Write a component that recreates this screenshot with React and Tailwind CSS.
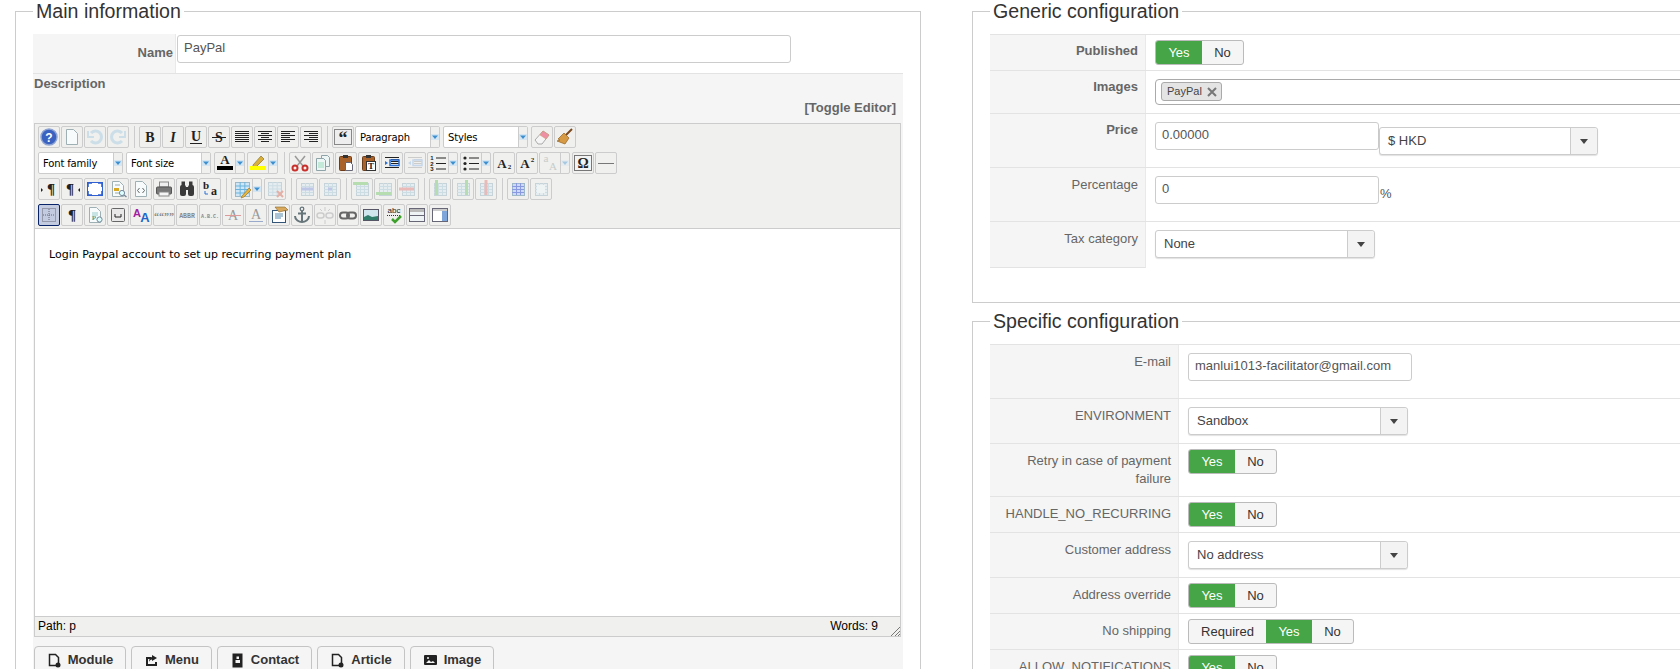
import React from "react";

const sans = "font-['Liberation_Sans',Arial,sans-serif]";

const Lines = ({ rows, color = "#222" }) => (
  <g stroke={color} strokeWidth="1">
    {rows.map(([a, b], i) => (
      <line key={i} x1={a} x2={b} y1={4.5 + i * 2} y2={4.5 + i * 2} />
    ))}
  </g>
);
const T = ({ c, x = 10, y = 15, s = 14, st = "normal", w = "bold", f = "#222", fam = "Liberation Serif" }) => (
  <text x={x} y={y} fontSize={s} fontStyle={st} fontWeight={w} fill={f} textAnchor="middle" fontFamily={fam}>{c}</text>
);
const Grid = ({ x = 4, y = 4, w = 12, h = 12, fill = "#dcebf3", line = "#a9cbdc" }) => (
  <g>
    <rect x={x + 0.5} y={y + 0.5} width={w} height={h} fill={fill} stroke="#9db9c8" />
    {[1, 2, 3].map((k) => (
      <line key={k} x1={x} x2={x + w} y1={y + 0.5 + (k * h) / 4} y2={y + 0.5 + (k * h) / 4} stroke={line} />
    ))}
    {[1, 2].map((k) => (
      <line key={k} y1={y} y2={y + h} x1={x + 0.5 + (k * w) / 3} x2={x + 0.5 + (k * w) / 3} stroke={line} />
    ))}
  </g>
);
const Page = ({ fill = "#f7fbfb" }) => <path d="M4.5 2.5h7l4 4v11h-11z" fill={fill} stroke="#9fb0b5" />;
const Clip = () => (
  <g>
    <rect x="3.5" y="3.5" width="12" height="14" rx="1" fill="#a9622a" stroke="#6d3c18" />
    <rect x="7" y="2" width="5" height="3" fill="#333" />
  </g>
);

const icons = {
  help: (<g><circle cx="10" cy="10" r="8" fill="#3a62c0" stroke="#8ea4d2" strokeWidth="1.5" /><T c="?" y={14.5} s={12} f="#fff" fam="Liberation Sans" /></g>),
  page: <Page />,
  undo: (<g fill="none" stroke="#a9cde4" strokeWidth="3"><path d="M6 6a6 6 0 1 1 0 8" /><path d="M3 4v6h6" strokeWidth="2" /></g>),
  redo: (<g fill="none" stroke="#a9cde4" strokeWidth="3"><path d="M14 6a6 6 0 1 0 0 8" /><path d="M17 4v6h-6" strokeWidth="2" /></g>),
  b: <T c="B" />,
  i: <T c="I" st="italic" />,
  u: (<g><T c="U" y={14} w="bold" /><line x1="4" x2="16" y1="16.5" y2="16.5" stroke="#222" /></g>),
  s: (<g><T c="S" /><line x1="3" x2="17" y1="10.5" y2="10.5" stroke="#222" /></g>),
  justify: <Lines rows={[[3, 17], [3, 17], [3, 17], [3, 17], [3, 17], [3, 17]]} />,
  center: <Lines rows={[[3, 17], [6, 14], [3, 17], [6, 14], [3, 17], [6, 14]]} />,
  left: <Lines rows={[[3, 17], [3, 12], [3, 17], [3, 12], [3, 17], [3, 12]]} />,
  right: <Lines rows={[[3, 17], [8, 17], [3, 17], [8, 17], [3, 17], [8, 17]]} />,
  quote: (<g><rect x="1.5" y="2.5" width="17" height="15" fill="#eee" stroke="#888" /><T c="“" y={17} s={18} /></g>),
  eraser: (<g><path d="M3 13 11 4l6 4-7 9H6z" fill="#f5f5f5" stroke="#aaa" /><path d="M11 4l6 4-3 4-6-4z" fill="#ee8fa5" stroke="#c96" strokeWidth=".5" /></g>),
  broom: (<g><path d="M11 8 17 2" stroke="#7a4a1e" strokeWidth="2" /><path d="M9 6l5 5-4 6-8-3 3-1-2-1z" fill="#d69a45" stroke="#93611e" strokeWidth=".7" /></g>),
  fore: (<g><T c="A" y={11} s={13} /><rect x="2" y="13" width="16" height="4" fill="#000" /></g>),
  hilite: (<g><path d="M5 12 13 3l3 3-8 8H5z" fill="#d9b13a" stroke="#8a7230" strokeWidth=".7" /><rect x="2" y="13" width="16" height="4" fill="#ff0" /></g>),
  cut: (<g fill="none" stroke="#c9302c" strokeWidth="2"><path d="M7 13 15 3" stroke="#999" strokeWidth="1.5" /><path d="M13 13 5 3" stroke="#999" strokeWidth="1.5" /><circle cx="5" cy="15" r="2.5" /><circle cx="15" cy="15" r="2.5" /></g>),
  copy: (<g><path d="M3.5 5.5h7l2 2v10h-9z" fill="#eef5f5" stroke="#8da3a8" /><path d="M8.5 2.5h6l2 2v9h-4v-6l-2-2h-2z" fill="#eef5f5" stroke="#8da3a8" /><path d="M5 10h6M5 12h6M5 14h6" stroke="#9db" /></g>),
  paste: (<g><Clip /><path d="M9.5 9.5h5l2 2v6h-7z" fill="#fff" stroke="#667" /></g>),
  pastet: (<g><Clip /><rect x="7.5" y="8.5" width="9" height="9" fill="#fff" stroke="#333" /><T c="T" x={12} y={16} s={9} /></g>),
  indent: (<g><Lines rows={[[3, 17], [9, 17], [9, 17], [9, 17], [9, 17], [3, 17]]} color="#222" /><rect x="8" y="7" width="9" height="5.5" fill="none" stroke="#2a6fd6" strokeWidth="1.5" /><path d="M3 8l3 2-3 2z" fill="#2a6fd6" /></g>),
  outdent: (<g><Lines rows={[[3, 17], [9, 17], [9, 17], [9, 17], [9, 17], [3, 17]]} color="#aaa" /><rect x="8" y="7" width="9" height="5.5" fill="none" stroke="#9cc0ea" strokeWidth="1.5" /><path d="M6 8l-3 2 3 2z" fill="#9cc0ea" /></g>),
  num: (<g><T c="1" x={4} y={7} s={6} fam="Liberation Sans" /><T c="2" x={4} y={12.5} s={6} fam="Liberation Sans" /><T c="3" x={4} y={18} s={6} fam="Liberation Sans" /><path d="M8 5h10M8 10.5h10M8 16h10" stroke="#222" /></g>),
  bul: (<g><circle cx="4" cy="5" r="1.6" fill="#222" /><circle cx="4" cy="10.5" r="1.6" fill="#222" /><circle cx="4" cy="16" r="1.6" fill="#222" /><path d="M8 5h10M8 10.5h10M8 16h10" stroke="#222" /></g>),
  sub: (<g><T c="A" x={8} y={15} s={13} /><T c="2" x={15.5} y={16} s={7} /></g>),
  sup: (<g><T c="A" x={8} y={15} s={13} /><T c="2" x={15.5} y={9} s={7} /></g>),
  aa: (<g><T c="a" x={6} y={9} s={11} f="#9aa" w="normal" /><T c="A" x={13} y={17} s={11} f="#9aa" w="normal" /></g>),
  charmap: (<g><rect x="1.5" y="2.5" width="17" height="15" fill="#f3f3f3" stroke="#777" /><T c="Ω" y={15} s={14} /></g>),
  hr: <line x1="2" x2="18" y1="10.5" y2="10.5" stroke="#777" />,
  ltr: (<g><T c="¶" x={12} y={15} s={15} /><path d="M2 9l2 2-2 2z" fill="#222" /></g>),
  rtl: (<g><T c="¶" x={8} y={15} s={15} /><path d="M18 9l-2 2 2 2z" fill="#222" /></g>),
  full: (<g><rect x="2.5" y="3.5" width="15" height="13" fill="#fff" stroke="#2f5fd0" /><path d="M3 8V4h4M13 4h4v4M17 12v4h-4M7 16H3v-4" stroke="#2f5fd0" strokeWidth="1.6" fill="none" /></g>),
  preview: (<g><Page /><rect x="6" y="9" width="5" height="3" fill="#d9a81e" /><path d="M7 6h5M7 14h4" stroke="#9aa" /><circle cx="14" cy="14" r="2.6" fill="#dff" stroke="#789" /><path d="M16 16l2.5 2" stroke="#789" strokeWidth="1.5" /></g>),
  code: (<g><Page /><path d="M8.5 9l-2 2.5 2 2.5M11.5 9l2 2.5-2 2.5" fill="none" stroke="#666" /></g>),
  print: (<g><rect x="5.5" y="3" width="9" height="5" fill="#eee" stroke="#888" /><rect x="2.5" y="8" width="15" height="7" rx="1" fill="#777" stroke="#555" /><rect x="5" y="13" width="10" height="4" fill="#f5f5f5" stroke="#888" /></g>),
  find: (<g fill="#3a3a3a"><rect x="3" y="6" width="6" height="11" rx="2" /><rect x="11" y="6" width="6" height="11" rx="2" /><rect x="4.5" y="2.5" width="3.5" height="5" /><rect x="12" y="2.5" width="3.5" height="5" /><rect x="8" y="8" width="4" height="3" /></g>),
  replace: (<g><T c="b" x={6} y={10} s={11} /><T c="a" x={14} y={16} s={12} /><path d="M5 12v3h3" stroke="#2a6fd6" fill="none" /></g>),
  tbl: (<g><Grid x={3} y={3} w={14} h={14} fill="#cfe6f6" line="#6bb3dc" /><path d="M10 17l7-8 2 2-7 7-3 1z" fill="#e9b53a" stroke="#8a6d2a" strokeWidth=".6" /></g>),
  tdel: (<g><Grid x={3} y={3} w={13} h={13} /><path d="M12 12l6 6M18 12l-6 6" stroke="#d9705f" strokeWidth="2" /></g>),
  rowp: (<g><Grid /><rect x="4" y="8.5" width="12" height="3" fill="#8fa0e0" /></g>),
  cellp: (<g><Grid /><rect x="8" y="8.5" width="4" height="3" fill="#8fa0e0" /></g>),
  rowb: (<g><Grid /><rect x="1" y="3" width="15" height="3" fill="#7ccc74" /></g>),
  rowa: (<g><Grid /><rect x="1" y="13" width="15" height="3" fill="#7ccc74" /></g>),
  rowd: (<g><Grid /><rect x="1" y="8.5" width="15" height="3" fill="#e58585" /></g>),
  colb: (<g><Grid /><rect x="5" y="1" width="3" height="15" fill="#7ccc74" /></g>),
  cola: (<g><Grid /><rect x="12" y="1" width="3" height="15" fill="#7ccc74" /></g>),
  cold: (<g><Grid /><rect x="8.5" y="1" width="3" height="15" fill="#e58585" /></g>),
  cell: <Grid fill="#cfd8f8" line="#8a9ae0" />,
  merge: (<g><Grid /><rect x="6" y="6" width="8" height="8" fill="#eef7fb" /></g>),
  visual: (<g fill="none" stroke="#667" strokeDasharray="1 1"><rect x="3.5" y="3.5" width="13" height="13" /><path d="M10 4v12M4 10h12" /></g>),
  para: <T c="¶" y={15} s={15} />,
  tpl: (<g><Page /><path d="M7 8h6M7 10h6" stroke="#9cc" /><T c="P" x={9} y={15} s={7} f="#3a9" /><circle cx="14.5" cy="14.5" r="2.6" fill="#dff" stroke="#789" /></g>),
  nbsp: (<g><rect x="3.5" y="3.5" width="13" height="13" rx="1" fill="#e8e8e8" stroke="#666" /><path d="M7 9v3h6V9" fill="none" stroke="#222" /></g>),
  styleprop: (<g><T c="A" x={6} y={12} s={11} f="#a020a0" fam="Liberation Sans" /><T c="A" x={14} y={17} s={13} f="#2465c9" fam="Liberation Sans" /></g>),
  cite: <T c="““””" y={15} s={10} f="#888" />,
  abbr: <T c="ABBR" y={13} s={6.5} f="#888" fam="Liberation Mono" w="bold" />,
  acro: <T c="A.B.C." y={13} s={5} f="#888" fam="Liberation Mono" w="bold" />,
  del: (<g><T c="A" s={14} w="normal" f="#999" /><line x1="2" x2="18" y1="10.5" y2="10.5" stroke="#d99" /></g>),
  ins: (<g><T c="A" y={14} s={14} w="normal" f="#999" /><line x1="3" x2="17" y1="16.5" y2="16.5" stroke="#9ac" /></g>),
  tmpl: (<g><rect x="3.5" y="5.5" width="13" height="12" fill="#fff" stroke="#357" /><path d="M6 9h8M6 11h8M6 13h6" stroke="#58a" /><path d="M6 2l10 0 3 3-9 2z" fill="#d9a85a" stroke="#85642e" strokeWidth=".6" /></g>),
  anchor: (<g fill="none" stroke="#66757a" strokeWidth="2"><circle cx="10" cy="4" r="1.8" strokeWidth="1.3" /><path d="M10 6v11M6 8.5h8" /><path d="M3 11c0 4 4 6 7 6s7-2 7-6" /></g>),
  unlink: (<g fill="none" stroke="#ccc" strokeWidth="1.5"><rect x="2" y="8" width="7" height="5" rx="2.5" /><rect x="11" y="8" width="7" height="5" rx="2.5" /><path d="M10 2v4M10 15v4M5 4l2 2M15 4l-2 2" strokeWidth="1" /></g>),
  link: (<g fill="none" stroke="#666" strokeWidth="2"><rect x="2" y="7.5" width="9" height="6" rx="3" /><rect x="9" y="7.5" width="9" height="6" rx="3" /></g>),
  image: (<g><rect x="2.5" y="4.5" width="15" height="11" fill="#cfe6ee" stroke="#556" /><path d="M3 15v-3l4-2 4 2 6-1v4z" fill="#2f7d6a" /></g>),
  spell: (<g><T c="abc" y={8} s={8} w="normal" fam="Liberation Sans" /><line x1="3" x2="17" y1="10.5" y2="10.5" stroke="#333" strokeDasharray="1 1" /><path d="M8 14l3 3 6-6" fill="none" stroke="#3ea02c" strokeWidth="2.5" /></g>),
  layer: (<g><rect x="2.5" y="3.5" width="15" height="13" fill="#eef3f6" stroke="#667" /><rect x="3" y="4" width="14" height="3" fill="#b9b9b9" /><line x1="3" x2="17" y1="10.5" y2="10.5" stroke="#667" /></g>),
  side: (<g><rect x="2.5" y="3.5" width="15" height="13" fill="#fff" stroke="#667" /><rect x="3" y="4" width="14" height="2" fill="#ccc" /><rect x="12" y="6" width="5" height="10" fill="#7fa6da" /></g>),
};

const Btn = ({ i, dim, active }) => (
  <div className={`w-[22px] h-[22px] mr-px shrink-0 rounded-[2px] border flex items-center justify-center ${active ? "border-[#0a246a] bg-[#c2cbe0]" : "border-[#ccc]"}`}>
    <svg width="20" height="20" viewBox="0 0 20 20" className={dim ? "opacity-50" : ""}>{icons[i]}</svg>
  </div>
);
const Drop = ({ dim }) => (
  <svg width="8" height="8" viewBox="0 0 8 8" className={dim ? "opacity-40" : ""}>
    <rect x="0" y="1" width="8" height="6" fill="#d5e6f2" />
    <path d="M1 2.5h6L4 6z" fill="#3c8fd0" />
  </svg>
);
const Split = ({ i, dim }) => (
  <div className="flex h-[22px] w-[31px] mr-[2px] shrink-0 rounded-[2px] border border-[#ccc]">
    <div className="w-[20px] flex items-center justify-center">
      <svg width="20" height="20" viewBox="0 0 20 20" className={dim ? "opacity-50" : ""}>{icons[i]}</svg>
    </div>
    <div className="flex-1 border-l border-[#ccc] flex items-center justify-center"><Drop dim={dim} /></div>
  </div>
);
const Sep = () => <div className="ml-[4px] mr-[4px] w-px h-[22px] bg-[#ccc] shrink-0" />;
const MceSelect = ({ label }) => (
  <div className="flex h-[22px] w-[85px] mr-[3px] shrink-0 rounded-[2px] border border-[#ccc] bg-white">
    <div className="w-[74px] pl-[4px] pt-px text-[10px] leading-[20px] tracking-[-0.15px] text-black font-['DejaVu_Sans',sans-serif]">{label}</div>
    <div className="flex-1 border-l border-[#ccc] bg-[#f0f0ee] flex items-center justify-center"><Drop /></div>
  </div>
);
const Bar = ({ children }) => <div className="flex items-center h-[22px]">{children}</div>;

const Toggle = ({ opts = ["Yes", "No"], on = "Yes" }) => (
  <div className="inline-flex h-[25px] rounded-[3px] border border-[#bbb] overflow-hidden text-[13px] leading-[23px] bg-[#f5f5f5] text-[#333]">
    {opts.map((o) => (
      <div key={o} className={o === on
        ? "w-[46px] text-center bg-[#46a546] text-white"
        : o === "Required" ? "w-[77px] text-center" : "w-[41px] text-center"}>{o}</div>
    ))}
  </div>
);
const Input = ({ w, children }) => (
  <div className={`${w} h-[28px] shrink-0 rounded-[3px] border border-[#ccc] bg-white pl-[6px] pt-[3px] text-[13px] leading-[18px] text-[#555]`}>{children}</div>
);
const Select = ({ w, children, className = "" }) => (
  <div className={`${w} ${className} flex h-[28px] shrink-0 rounded-[3px] border border-[#ccc] bg-white shadow-[0_1px_1px_rgba(0,0,0,0.12)] text-[13px] leading-[26px] text-[#444]`}>
    <div className="flex-1 pl-[8px]">{children}</div>
    <div className="w-[27px] border-l border-[#ccc] bg-[#f3f3f3] rounded-r-[3px] flex items-center justify-center">
      <svg width="8" height="5" viewBox="0 0 8 5"><path d="M0 0h8L4 5z" fill="#444" /></svg>
    </div>
  </div>
);
const Label = ({ lw, bold, last, children }) => (
  <div className={`${lw} shrink-0 bg-[#f5f5f5] border-r border-[#e9e9e9] pr-[7px] ${bold ? "pt-[7px] font-bold" : "pt-[8px]"} text-right text-[13px] leading-[18px] text-[#666] ${last ? "border-b border-b-[#e3e3e3]" : ""}`}>{children}</div>
);
const Row = ({ label, lw, h, last, bold, children }) => (
  <div className={`flex ${h} ${last ? "" : "border-b border-[#e3e3e3]"}`}>
    <Label lw={lw} bold={bold} last={last}>{label}</Label>
    <div className="flex-1 pl-[9px] pt-[8px] flex items-start">{children}</div>
  </div>
);
const TogRow = ({ label, lw, h, bold, t }) => (
  <div className={`flex ${h} border-b border-[#e3e3e3]`}>
    <Label lw={lw} bold={bold}>{label}</Label>
    <div className="flex-1 pl-[9px] pt-[5px] flex items-start"><Toggle {...t} /></div>
  </div>
);
const Field = ({ title, className = "", children }) => (
  <fieldset className={`border border-[#ccc] pl-[17px] pt-[12px] ${className}`}>
    <legend className="px-[3px] text-[19.6px] leading-[22px] text-[#333]">{title}</legend>
    {children}
  </fieldset>
);

const Ico = ({ k }) => (
  <svg width="15" height="15" viewBox="0 0 15 15" className="shrink-0">
    {k === "file" && (<g><path d="M2.5 1.5h6l3 3v8h-9z" fill="none" stroke="#222" strokeWidth="1.5" /><circle cx="11" cy="12" r="2.5" fill="#222" /></g>)}
    {k === "share" && (<g><path d="M2 4h5v2H4v5h7V9h2v4H2z" fill="#222" /><path d="M8 2l5 3-5 3V6.5C6.5 6.5 5.5 7.5 5 9c0-3 1-4.5 3-5z" fill="#222" /></g>)}
    {k === "book" && (<g><rect x="2.5" y="0.5" width="10" height="14" fill="#222" /><rect x="6.5" y="3.5" width="2.5" height="2.5" fill="#f5f5f5" /><rect x="5.5" y="7" width="4.5" height="3" fill="#f5f5f5" /></g>)}
    {k === "pic" && (<g><rect x="1" y="2" width="13" height="10" rx="1" fill="#222" /><path d="M3 10l3-3 2 2 2-1 2 2z" fill="#f5f5f5" /><circle cx="5" cy="5" r="1" fill="#f5f5f5" /></g>)}
  </svg>
);
const Action = ({ k, label, w }) => (
  <div className={`${w} h-[28px] shrink-0 rounded-[4px] border border-[#c4c4c4] bg-[#f5f5f5] flex items-center justify-center gap-[6px] text-[13px] font-bold text-[#333]`}>
    <Ico k={k} />{label}
  </div>
);

export default function App() {
  return (
    <div className={`${sans} w-[1680px] h-[669px] overflow-hidden bg-white flex pl-[15px]`}>
      <Field title="Main information" className="w-[906px] shrink-0 h-[760px]">
        <div className="w-[870px]">
          <div className="flex h-[40px] border-b border-[#e3e3e3]">
            <div className="w-[143px] bg-[#f5f5f5] border-r border-[#e9e9e9] pr-[2px] pt-[10px] text-right text-[13px] leading-[18px] font-bold text-[#666]">Name</div>
            <div className="flex-1 pl-px pt-px">
              <Input w="w-[614px]">PayPal</Input>
            </div>
          </div>
          <div className="bg-[#f5f5f5] h-[640px] pt-px">
            <div className="pl-px text-[13px] leading-[18px] font-bold text-[#666]">Description</div>
            <div className="mt-[6px] mb-[6px] pr-[7px] text-right text-[13px] leading-[18px] font-bold text-[#666]">[Toggle Editor]</div>
            <div className="ml-px w-[867px] border border-[#ccc]">
              <div className="bg-[#f0f0ee] border-b border-[#ccc] pl-[3px] pt-[2px] pb-[2px] flex flex-col gap-[4px]">
                <Bar>
                  <Btn i="help" /><Btn i="page" /><Btn i="undo" dim /><Btn i="redo" dim /><Sep />
                  <Btn i="b" /><Btn i="i" /><Btn i="u" /><Btn i="s" /><Btn i="justify" /><Btn i="center" /><Btn i="left" /><Btn i="right" /><Sep />
                  <Btn i="quote" /><MceSelect label="Paragraph" /><MceSelect label="Styles" /><Btn i="eraser" /><Btn i="broom" />
                </Bar>
                <Bar>
                  <MceSelect label="Font family" /><MceSelect label="Font size" /><Split i="fore" /><Split i="hilite" /><Sep />
                  <Btn i="cut" /><Btn i="copy" /><Btn i="paste" /><Btn i="pastet" /><Btn i="indent" /><Btn i="outdent" dim /><Split i="num" /><Split i="bul" />
                  <Btn i="sub" /><Btn i="sup" /><Split i="aa" dim /><Btn i="charmap" /><Btn i="hr" />
                </Bar>
                <Bar>
                  <Btn i="ltr" /><Btn i="rtl" /><Btn i="full" /><Btn i="preview" /><Btn i="code" /><Btn i="print" /><Btn i="find" /><Btn i="replace" /><Sep />
                  <Split i="tbl" /><Btn i="tdel" dim /><Sep />
                  <Btn i="rowp" dim /><Btn i="cellp" dim /><Sep />
                  <Btn i="rowb" dim /><Btn i="rowa" dim /><Btn i="rowd" dim /><Sep />
                  <Btn i="colb" dim /><Btn i="cola" dim /><Btn i="cold" dim /><Sep />
                  <Btn i="cell" /><Btn i="merge" dim />
                </Bar>
                <Bar>
                  <Btn i="visual" active /><Btn i="para" /><Btn i="tpl" /><Btn i="nbsp" /><Btn i="styleprop" /><Btn i="cite" /><Btn i="abbr" /><Btn i="acro" /><Btn i="del" /><Btn i="ins" />
                  <Btn i="tmpl" /><Btn i="anchor" /><Btn i="unlink" /><Btn i="link" /><Btn i="image" /><Btn i="spell" /><Btn i="layer" /><Btn i="side" />
                </Bar>
              </div>
              <div className="h-[387px] bg-white pl-[14px] pt-[19px] text-[11px] leading-[14px] text-black font-['DejaVu_Sans',sans-serif]">
                Login Paypal account to set up recurring payment plan
              </div>
              <div className="relative h-[20px] border-t border-[#ccc] bg-[#f0f0ee] flex justify-between pl-[3px] pr-[22px] text-[12px] leading-[19px] text-black">
                <span>Path: p</span>
                <span>Words: 9</span>
                <svg width="10" height="10" viewBox="0 0 10 10" className="absolute right-0 bottom-0">
                  <path d="M1 10 10 1M5 10l5-5M8 10l2-2" stroke="#777" fill="none" />
                </svg>
              </div>
            </div>
            <div className="ml-px mt-[9px] flex gap-[5px]">
              <Action k="file" label="Module" w="w-[92px]" />
              <Action k="share" label="Menu" w="w-[81px]" />
              <Action k="book" label="Contact" w="w-[95px]" />
              <Action k="file" label="Article" w="w-[88px]" />
              <Action k="pic" label="Image" w="w-[84px]" />
            </div>
          </div>
        </div>
      </Field>

      <div className="ml-[51px] w-[900px] shrink-0">
        <Field title="Generic configuration" className="h-[303px]">
          <div className="border-t border-[#e3e3e3]">
            <TogRow label="Published" bold lw="w-[156px]" h="h-[36px]" />
            <div className="flex h-[43px] border-b border-[#e3e3e3]">
              <Label lw="w-[156px]" bold>Images</Label>
              <div className="flex-1 pl-[9px] pt-[8px]">
                <div className="flex items-start h-[26px] rounded-[4px] border border-[#aaa] pl-[5px] pt-[2px]">
                  <div className="flex items-center h-[19px] w-[61px] rounded-[3px] border border-[#aaa] bg-[#e4e4e4] pl-[5px] text-[11px] text-[#444]">
                    PayPal
                    <svg width="10" height="10" viewBox="0 0 10 10" className="ml-[5px]"><path d="M1 1l8 8M9 1 1 9" stroke="#777" strokeWidth="2" /></svg>
                  </div>
                </div>
              </div>
            </div>
            <Row label="Price" bold lw="w-[156px]" h="h-[54px]">
              <Input w="w-[224px]">0.00000</Input>
              <Select w="w-[219px]" className="mt-[5px]">$ HKD</Select>
            </Row>
            <Row label="Percentage" lw="w-[156px]" h="h-[54px]">
              <Input w="w-[224px]">0</Input>
              <span className="ml-px mt-[9px] text-[13px] leading-[18px] text-[#555]">%</span>
            </Row>
            <Row label="Tax category" lw="w-[156px]" h="h-[46px]" last>
              <Select w="w-[220px]">None</Select>
            </Row>
          </div>
        </Field>

        <Field title="Specific configuration" className="mt-[7px] h-[400px]">
          <div className="border-t border-[#e3e3e3]">
            <Row label="E-mail" lw="w-[189px]" h="h-[54px]">
              <Input w="w-[224px]">manlui1013-facilitator@gmail.com</Input>
            </Row>
            <Row label="ENVIRONMENT" lw="w-[189px]" h="h-[45px]">
              <Select w="w-[220px]">Sandbox</Select>
            </Row>
            <TogRow label="Retry in case of payment failure" lw="w-[189px]" h="h-[53px]" />
            <TogRow label="HANDLE_NO_RECURRING" lw="w-[189px]" h="h-[36px]" />
            <Row label="Customer address" lw="w-[189px]" h="h-[45px]">
              <Select w="w-[220px]">No address</Select>
            </Row>
            <TogRow label="Address override" lw="w-[189px]" h="h-[36px]" />
            <TogRow label="No shipping" lw="w-[189px]" h="h-[36px]" t={{ opts: ["Required", "Yes", "No"] }} />
            <TogRow label="ALLOW_NOTIFICATIONS" lw="w-[189px]" h="h-[36px]" />
          </div>
        </Field>
      </div>
    </div>
  );
}
